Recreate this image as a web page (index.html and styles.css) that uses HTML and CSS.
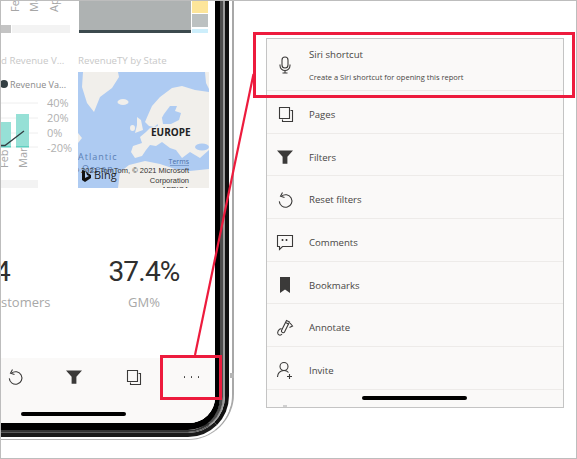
FILE: index.html
```html
<!DOCTYPE html>
<html lang="en">
<head>
    <meta charset="UTF-8">
    <meta name="viewport" content="width=device-width, initial-scale=1.0">
    <title>Siri shortcut</title>
    <link rel="stylesheet" href="styles.css">
</head>
<body>
    <!-- shared icons, used in the phone toolbar and in the sheet -->
    <svg class="defs" aria-hidden="true">
        <symbol id="i-pages" viewBox="0 0 18 18">
            <path d="M3.5 2.5h10v11h-10z" fill="none" stroke="#3b3a39" stroke-width="1.1"/>
            <path d="M14.5 5.5h2v11h-10v-2" fill="none" stroke="#3b3a39" stroke-width="1.1"/>
        </symbol>
        <symbol id="i-filter" viewBox="0 0 18 18">
            <path d="M1 2.5h16l-5.6 6.2v7h-4.8v-7z" fill="#3b3a39"/>
        </symbol>
        <symbol id="i-reset" viewBox="0 0 18 18">
            <path d="M5.5 5.2a6.3 6.3 0 1 1-2.2 5.2" fill="none" stroke="#3b3a39" stroke-width="1.1"/>
            <path d="M6.5 1.5l-2 3.7 4 1.3" fill="none" stroke="#3b3a39" stroke-width="1.1"/>
        </symbol>
    </svg>

    <div class="shot">
        <div class="phone">
            <div class="band-white">
                <div class="band-black">
                    <div class="band-dark">
                        <div class="band-light">
                            <div class="bezel">
                                <div class="screen">
                                    <div class="tiles">
                                        <div class="tile tile-chart">
                                            <svg class="ticks" viewBox="1 1 77 24">
                                                <g class="tick-text">
                                                    <text transform="rotate(-90 19 12)" x="19" y="12">Feb</text>
                                                    <text transform="rotate(-90 38 12)" x="38" y="12">Mar</text>
                                                    <text transform="rotate(-90 58 12)" x="58" y="12">Apr</text>
                                                </g>
                                            </svg>
                                            <div class="scroller">
                                                <span class="thumb"></span>
                                                <span class="track"></span>
                                            </div>
                                            <div class="tile-title">d Revenue V...</div>
                                            <div class="legend"><span class="legend-dot"></span>Revenue Va...</div>
                                            <svg class="plot" viewBox="1 91 77 89">
                                                <g stroke="#eeeeee" stroke-width="1">
                                                    <path d="M1 103h37M1 118h37M1 133h37M1 147h37"/>
                                                </g>
                                                <rect x="1" y="122" width="10" height="25" fill="#96e0d6"/>
                                                <rect x="16" y="114" width="13" height="33" fill="#96e0d6"/>
                                                <rect x="16" y="146" width="13" height="1.5" fill="#5fd0c0"/>
                                                <rect x="1" y="146" width="10" height="1.5" fill="#5fd0c0"/>
                                                <path d="M1 145.500h4L24 131" fill="none" stroke="#333f43" stroke-width="1.300"/>
                                                <g class="axis-text">
                                                    <text x="47" y="107">40%</text>
                                                    <text x="47" y="122">20%</text>
                                                    <text x="47" y="137">0%</text>
                                                    <text x="47" y="152">-20%</text>
                                                </g>
                                                <g class="tick-text">
                                                    <text transform="rotate(-90 8 168)" x="8" y="168">Feb</text>
                                                    <text transform="rotate(-90 27 168)" x="27" y="168">Mar</text>
                                                </g>
                                            </svg>
                                            <div class="scroller-low"></div>
                                        </div>
                                        <div class="tile tile-map">
                                            <div class="treemap">
                                                <div class="treemap-main"></div>
                                                <div class="treemap-side">
                                                    <span class="swatch swatch-yellow"></span>
                                                    <span class="swatch swatch-gray"></span>
                                                    <span class="swatch swatch-blue"></span>
                                                </div>
                                            </div>
                                            <div class="tile-title">RevenueTY by State</div>
                                            <svg class="map" viewBox="78 72 131 116">
                                                <rect x="78" y="72" width="131" height="116" fill="#aecbf2"/>
                                                <g fill="#f1efeb">
                                                    <path d="M83 72h35l1 5-7 11-12 9-6 15-7-9-5-16z"/>
                                                    <path d="M205 72h4v17l-3-6z"/>
                                                    <path d="M78 133l4 5-4 5z"/>
                                                    <ellipse cx="123" cy="102" rx="5.500" ry="3"/>
                                                    <path d="M137 117l4 3 2 10-8 3 2-8z"/>
                                                    <ellipse cx="132.500" cy="128" rx="2.500" ry="3"/>
                                                    <path d="M148 115l4-9 8-9 12-9 10-2 13 4 14 2v58l-9 8-10-6-8 6-6-8-6-2-8-6-6 4-6-1-4 5-4 6-7 2-4-6 2-6 9-3-2-6 6-5 4-4 8-2-1-6 5-2 1 6 8 0 8-4 2-7-6-2 2-5h-7l-6 8-5 9-5 4-5-1-4-4z"/>
                                                    <path d="M118 188l2-16 9-7 16-4 15 3 15 5 15 2 19-2v19z"/>
                                                </g>
                                                <g fill="#aecbf2">
                                                    <ellipse cx="202" cy="147" rx="7" ry="3.500"/>
                                                </g>
                                                <text class="map-europe" x="151" y="136">EUROPE</text>
                                                <text class="map-ocean" x="78" y="160">Atlantic</text>
                                                <text class="map-ocean" x="82" y="172">Ocean</text>
                                                <text class="map-terms" x="189" y="164">Terms</text>
                                                <path d="M170 165.500h19" stroke="#4a6fa8" stroke-width="0.500"/>
                                                <g class="map-credit">
                                                    <text x="189" y="173">© 2021 TomTom, © 2021 Microsoft</text>
                                                    <text x="189" y="183">Corporation</text>
                                                    <text x="189" y="192">AFRICA</text>
                                                </g>
                                                <path d="M82 170l3 1v7l4-2-2-1-1-3 5 3v3l-6 4-3-2z" fill="#111111"/>
                                                <text class="map-bing" x="94" y="179">Bing</text>
                                            </svg>
                                        </div>
                                    </div>
                                    <div class="kpis">
                                        <div class="kpi kpi-left">
                                            <div class="kpi-value">4</div>
                                            <div class="kpi-label">stomers</div>
                                        </div>
                                        <div class="kpi kpi-right">
                                            <div class="kpi-value">37.4%</div>
                                            <div class="kpi-label">GM%</div>
                                        </div>
                                    </div>
                                    <div class="toolbar">
                                        <div class="tools">
                                            <span class="tool"><svg class="tool-icon"><use href="#i-reset"/></svg></span>
                                            <span class="tool"><svg class="tool-icon"><use href="#i-filter"/></svg></span>
                                            <span class="tool"><svg class="tool-icon"><use href="#i-pages"/></svg></span>
                                            <span class="tool tool-more"><i></i><i></i><i></i></span>
                                        </div>
                                        <div class="home-bar"></div>
                                    </div>
                                </div>
                            </div>
                        </div>
                    </div>
                </div>
            </div>
            <span class="side-button"></span>
        </div>

        <div class="sheet">
            <div class="row row-first">
                <svg class="row-icon" viewBox="0 0 18 18">
                    <rect x="6" y="1" width="6" height="11" rx="3" fill="none" stroke="#3b3a39" stroke-width="1.100"/>
                    <path d="M4 8.500v1a5 5 0 0 0 10 0v-1M9 14.500v2.500M6.500 17h5" fill="none" stroke="#3b3a39" stroke-width="1.100"/>
                </svg>
                <div class="row-text">
                    <div class="row-title">Siri shortcut</div>
                    <div class="row-sub">Create a Siri shortcut for opening this report</div>
                </div>
            </div>
            <div class="row">
                <svg class="row-icon"><use href="#i-pages"/></svg>
                <div class="row-title">Pages</div>
            </div>
            <div class="row">
                <svg class="row-icon"><use href="#i-filter"/></svg>
                <div class="row-title">Filters</div>
            </div>
            <div class="row">
                <svg class="row-icon"><use href="#i-reset"/></svg>
                <div class="row-title">Reset filters</div>
            </div>
            <div class="row">
                <svg class="row-icon" viewBox="0 0 18 18">
                    <path d="M1.500 2.500h15v11h-10l-3 3v-3h-2z" fill="none" stroke="#3b3a39" stroke-width="1.100"/>
                    <path d="M6.500 6v2M10.500 6v2" stroke="#3b3a39" stroke-width="1.600"/>
                </svg>
                <div class="row-title">Comments</div>
            </div>
            <div class="row">
                <svg class="row-icon" viewBox="0 0 18 18">
                    <path d="M4 1h10v16l-5-3.500-5 3.500z" fill="#3b3a39"/>
                </svg>
                <div class="row-title">Bookmarks</div>
            </div>
            <div class="row">
                <svg class="row-icon" viewBox="0 0 18 18">
                    <path d="M10.500 1.500l3 1.500-5 10c-.8 1.500-3.700.2-3-1.500z" fill="none" stroke="#3b3a39" stroke-width="1.100"/>
                    <path d="M9.500 3.500l3 1.500M14 4l2.500 3-3 1.500M5.500 9.500c-3 .5-4.500 3.500-3.500 5.500 1 1.500 3 1.500 4 0" fill="none" stroke="#3b3a39" stroke-width="1.100"/>
                </svg>
                <div class="row-title">Annotate</div>
            </div>
            <div class="row">
                <svg class="row-icon" viewBox="0 0 18 18">
                    <circle cx="8" cy="5.500" r="4" fill="none" stroke="#3b3a39" stroke-width="1.100"/>
                    <path d="M1.500 16c0-3.500 2.500-6.500 6.500-6.500 2 0 3.500.7 4.500 2M13.500 13v5M11 15.500h5" fill="none" stroke="#3b3a39" stroke-width="1.100"/>
                </svg>
                <div class="row-title">Invite</div>
            </div>
            <div class="row-cut"><span class="cut-mark"></span></div>
            <div class="sheet-home"></div>
        </div>

        <!-- red callouts drawn over the picture -->
        <div class="callout callout-more"></div>
        <div class="callout callout-siri"></div>
        <svg class="callout-line" viewBox="0 0 577 459">
            <line x1="195" y1="355" x2="253.500" y2="74" stroke="#ed1b3d" stroke-width="2.200"/>
        </svg>
    </div>
</body>
</html>
```

FILE: styles.css
```css
* {
    box-sizing: border-box;
}
body {
    margin: 0;
    background: #ffffff;
    font-family: "Open Sans", "Noto Sans", sans-serif;
}
.defs {
    position: absolute;
    width: 0;
    height: 0;
}
.shot {
    position: relative;
    display: flex;
    align-items: flex-start;
    width: 577px;
    height: 459px;
    border: 1px solid #bdbdbd;
    overflow: hidden;
    background: #ffffff;
}

/* phone frame, one nested band per ring of the case */
.phone {
    position: relative;
    flex: none;
    width: 233px;
    height: 439px;
    border-right: 2px solid #a8a8a8;
    border-bottom: 1px solid #b4b4b4;
    border-bottom-right-radius: 46px;
}
.band-white,
.band-black,
.band-dark,
.band-light,
.bezel {
    height: 100%;
}
.band-white {
    border-right: 3px solid #ffffff;
    border-bottom: 2px solid #ffffff;
    border-bottom-right-radius: 44px;
}
.band-black {
    border-right: 4px solid #111111;
    border-bottom: 4px solid #1a1a1a;
    border-bottom-right-radius: 41px;
}
.band-dark {
    border-right: 2px solid #9a9a9a;
    border-bottom: 1px solid #5a5a5a;
    border-bottom-right-radius: 37px;
}
.band-light {
    border-right: 3px solid #4d4d4d;
    border-bottom: 2px solid #333333;
    border-bottom-right-radius: 35px;
}
.bezel {
    border-right: 5px solid #000000;
    border-bottom: 7px solid #000000;
    border-bottom-right-radius: 32px;
}
.side-button {
    position: absolute;
    right: -2px;
    top: 372px;
    width: 4px;
    height: 5px;
    background: #b5b5b5;
}
.screen {
    display: flex;
    flex-direction: column;
    height: 100%;
    background: #ffffff;
    border-bottom-right-radius: 26px;
    overflow: hidden;
}

/* report tiles */
.tiles {
    display: flex;
}
.tile-chart {
    width: 77px;
}
.tile-map {
    width: 137px;
}
.ticks {
    display: block;
    width: 77px;
    height: 24px;
}
.tick-text text {
    font-size: 11px;
    fill: #a6a6a6;
}
.axis-text text {
    font-size: 11px;
    fill: #b0b0b0;
}
.scroller {
    display: flex;
    gap: 1px;
    height: 8px;
}
.thumb {
    width: 10px;
    background: #c4c4c4;
}
.track {
    width: 58px;
    background: #f3f3f3;
}
.scroller-low {
    width: 37px;
    height: 8px;
    background: #f3f3f3;
}
.tile-title {
    margin-top: 20px;
    height: 16px;
    font-size: 9.700px;
    line-height: 16px;
    color: #c8c8c8;
    white-space: nowrap;
}
.legend {
    display: flex;
    align-items: center;
    gap: 2px;
    margin-top: 8px;
    height: 14px;
    font-size: 9px;
    color: #8a8a8a;
    white-space: nowrap;
}
.legend-dot {
    flex: none;
    width: 8px;
    height: 8px;
    margin-left: -1px;
    border-radius: 50%;
    background: #333f43;
}
.plot {
    display: block;
    width: 77px;
    height: 89px;
}
.treemap {
    display: flex;
    gap: 1px;
    height: 32px;
    margin-left: 1px;
}
.treemap-main {
    width: 112px;
    background: #aeb2b2;
    border-bottom: 3px solid #3c4a4e;
}
.treemap-side {
    display: flex;
    flex-direction: column;
    gap: 1px;
    width: 16px;
}
.swatch {
    display: block;
}
.swatch-yellow {
    height: 12px;
    background: #fde59a;
}
.swatch-gray {
    height: 13px;
    margin-bottom: 1px;
    background: #bcc1c1;
}
.swatch-blue {
    height: 4px;
    background: #cdeefb;
}
.map {
    display: block;
    width: 131px;
    height: 116px;
    margin-top: 3px;
}
.map-europe {
    font-size: 10px;
    font-weight: 700;
    fill: #222222;
}
.map-ocean {
    font-size: 9px;
    letter-spacing: 1px;
    fill: #5b7fb5;
}
.map-terms {
    font-size: 7px;
    fill: #4a6fa8;
    text-anchor: end;
}
.map-credit text {
    font-family: "Liberation Sans", sans-serif;
    font-size: 7.500px;
    fill: #333333;
    text-anchor: end;
}
.map-bing {
    font-size: 11px;
    fill: #222222;
}

/* kpi cards */
.kpis {
    display: flex;
    padding-top: 64px;
}
.kpi-left {
    width: 107px;
}
.kpi-right {
    width: 72px;
    text-align: center;
}
.kpi-value {
    height: 40px;
    font-family: Roboto, sans-serif;
    font-size: 28px;
    line-height: 40px;
    letter-spacing: -0.800px;
    color: #2f2f2f;
    white-space: nowrap;
}
.kpi-left .kpi-value {
    margin-left: -6px;
    text-align: left;
}
.kpi-label {
    height: 20px;
    font-size: 13px;
    line-height: 20px;
    color: #a8a8a8;
}

/* bottom toolbar of the report */
.toolbar {
    margin-top: auto;
    height: 65px;
    padding-top: 10px;
    background: #faf9f8;
}
.tools {
    display: flex;
    height: 18px;
    margin-left: -16px;
}
.tool {
    display: flex;
    flex: none;
    align-items: center;
    justify-content: center;
    gap: 5.500px;
    width: 59px;
}
.tool-icon {
    display: block;
    width: 18px;
    height: 18px;
}
.tool-more i {
    display: block;
    width: 1.500px;
    height: 1.500px;
    border-radius: 50%;
    background: #3b3a39;
}
.home-bar {
    width: 105px;
    height: 4px;
    margin: 26px 0 0 20px;
    border-radius: 2px;
    background: #000000;
}

/* more menu */
.sheet {
    position: relative;
    flex: none;
    width: 298px;
    height: 370px;
    margin: 37px 0 0 32px;
    border: 1px solid #c4c4c4;
    background: #faf9f8;
    overflow: hidden;
}
.row {
    display: flex;
    align-items: center;
    height: 42.700px;
    padding: 5px 0 0 9px;
    border-bottom: 1px solid #edebe9;
}
.row-first {
    height: 52px;
    padding-top: 0;
}
.row-icon {
    flex: none;
    width: 18px;
    height: 18px;
    margin-right: 15px;
}
.row-title {
    font-size: 9.600px;
    color: #484644;
}
.row-first .row-title {
    margin-bottom: 11px;
}
.row-sub {
    font-size: 7.500px;
    color: #484644;
    white-space: nowrap;
}
.row-cut {
    display: flex;
    height: 20px;
    padding: 15px 0 0 16px;
}
.cut-mark {
    width: 4px;
    height: 2px;
    background: #d0d0d0;
}
.sheet-home {
    position: absolute;
    left: 95px;
    top: 357px;
    width: 105px;
    height: 4px;
    border-radius: 2px;
    background: #000000;
}

/* red callouts */
.callout {
    position: absolute;
    border: 3px solid #ed1b3d;
}
.callout-more {
    left: 159px;
    top: 354px;
    width: 62px;
    height: 45px;
}
.callout-siri {
    left: 252px;
    top: 31px;
    width: 322px;
    height: 66px;
}
.callout-line {
    position: absolute;
    left: -1px;
    top: -1px;
    width: 577px;
    height: 459px;
}
```
